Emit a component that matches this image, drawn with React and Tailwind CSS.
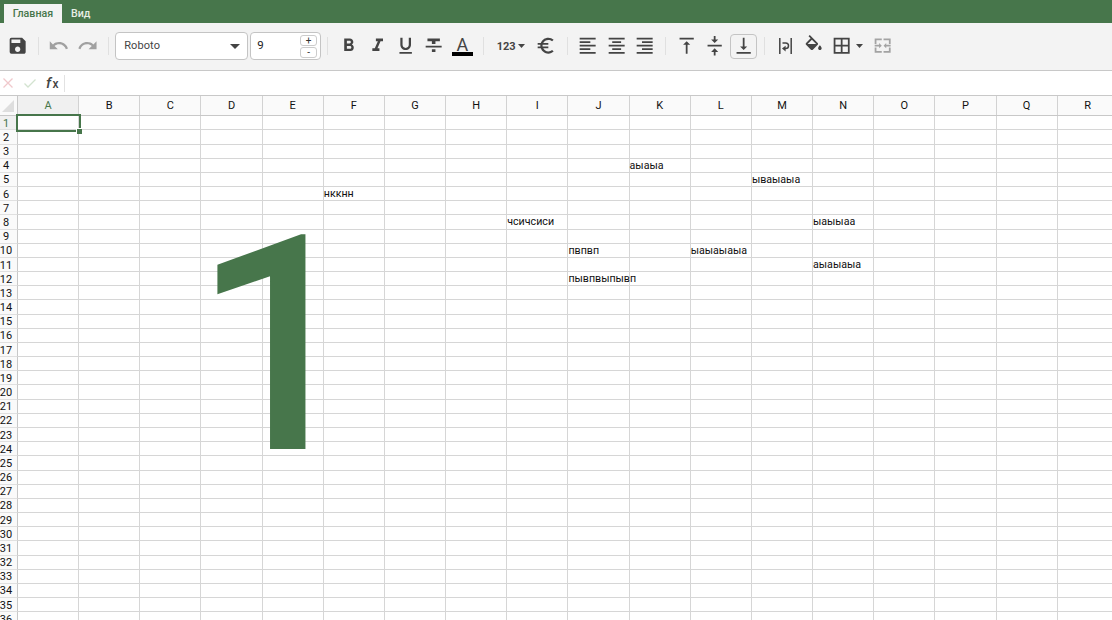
import {
  MdSave, MdUndo, MdRedo, MdFormatBold, MdFormatItalic, MdFormatUnderlined,
  MdEuroSymbol, MdFormatAlignLeft, MdFormatAlignCenter, MdFormatAlignRight,
  MdVerticalAlignTop, MdVerticalAlignCenter, MdVerticalAlignBottom,
  MdBorderAll, MdFormatStrikethrough,
} from "react-icons/md";

const COLUMNS = "ABCDEFGHIJKLMNOPQR".split("");
const ROWS = Array.from({ length: 36 }, (_, i) => i + 1);

const CELLS = {
  K4: "аыаыа",
  M5: "ываыаыа",
  F6: "нккнн",
  I8: "чсичсиси",
  N8: "ыаыыаа",
  J10: "пвпвп",
  L10: "ыаыаыаыа",
  N11: "аыаыаыа",
  J12: "пывпвыпывп",
};

function Tool({ children, className = "text-[#444]" }) {
  return (
    <button className={`flex h-[26px] w-[28.4px] shrink-0 items-center justify-center text-[21.33px] ${className}`}>
      {children}
    </button>
  );
}

function Separator() {
  return (
    <div className="flex w-[13.5px] shrink-0 justify-center">
      <div className="h-[18px] w-px bg-[#e0e0e0]" />
    </div>
  );
}

function Caret() {
  return (
    <svg className="h-[4px] w-[7px] shrink-0" viewBox="0 0 7 4" fill="#444">
      <path d="M0 0h7L3.5 4z" />
    </svg>
  );
}

function WrapIcon() {
  return (
    <svg className="h-[16px] w-[13px]" viewBox="0 0 13 16" fill="none" stroke="#444" strokeWidth="1.5">
      <path d="M.8 0v16M12.2 0v16M3.5 5h3.2a2.7 2.7 0 0 1 0 5.6H5" />
      <path d="M6.6 7.8v5.6L3 10.6z" fill="#444" stroke="none" />
    </svg>
  );
}

function FillIcon() {
  return (
    <svg className="size-[21.33px]" viewBox="0 0 24 24" fill="#444">
      <path d="M16.56 8.94 7.62 0 6.21 1.41l2.38 2.38-5.15 5.15a1.49 1.49 0 0 0 0 2.12l5.5 5.5c.29.29.68.44 1.06.44s.77-.15 1.06-.44l5.5-5.5c.59-.58.59-1.53 0-2.12zM5.21 10 10 5.21 14.79 10H5.21zM19 11.5s-2 2.17-2 3.5c0 1.1.9 2 2 2s2-.9 2-2c0-1.33-2-3.5-2-3.5z" />
    </svg>
  );
}

function MergeIcon() {
  return (
    <svg className="size-[21.33px]" viewBox="0 0 24 24" fill="#a3a3a3">
      <path d="M5 10H3V4h8v2H5zM19 18h-6v2h8v-6h-2zM5 18v-4H3v6h8v-2zM21 4h-8v2h6v4h2zM8 13v2l3-3-3-3v2H3v2zM16 11V9l-3 3 3 3v-2h5v-2z" />
    </svg>
  );
}

function Toolbar() {
  return (
    <div className="flex h-[48px] shrink-0 items-center border-b border-[#c8c8c8] bg-[#f3f3f3] pb-[1px] pl-[3px]">
      <Tool><MdSave /></Tool>
      <Separator />
      <Tool className="text-[#a0a0a0]"><MdUndo /></Tool>
      <Tool className="text-[#a0a0a0]"><MdRedo /></Tool>
      <Separator />
      <div className="flex h-[28px] w-[133px] shrink-0 items-center justify-between rounded-[4px] border border-[#c4c4c4] bg-white pr-[7px] pl-[8px]">
        <span className="text-[11px] tracking-[.1px] text-[#444]">Roboto</span>
        <svg className="h-[5px] w-[10px]" viewBox="0 0 10 5" fill="#444"><path d="M0 0h10L5 5z" /></svg>
      </div>
      <div className="ml-[2px] flex h-[28px] w-[71px] shrink-0 items-center justify-between rounded-[4px] border border-[#c4c4c4] bg-white pr-[3px] pl-[6px]">
        <span className="text-[11.5px] text-[#222]">9</span>
        <div className="flex flex-col gap-px text-[10px] leading-[9px] text-[#333]">
          <span className="h-[11px] w-[17px] rounded-[3px] border border-[#ccc] text-center">+</span>
          <span className="h-[11px] w-[17px] rounded-[3px] border border-[#ccc] text-center">-</span>
        </div>
      </div>
      <Separator />
      <Tool><MdFormatBold /></Tool>
      <Tool><MdFormatItalic /></Tool>
      <Tool><MdFormatUnderlined /></Tool>
      <Tool><MdFormatStrikethrough /></Tool>
      <Tool>
        <span className="flex h-[19px] w-[21px] flex-col items-center justify-between">
          <span className="text-[18px] leading-[15px]">A</span>
          <span className="h-[4px] w-[21px] bg-black" />
        </span>
      </Tool>
      <Separator />
      <button className="flex w-[41.8px] shrink-0 items-center pl-[4px] text-[#444]">
        <span className="w-[24px] text-[11px] leading-none font-bold">123</span>
        <Caret />
      </button>
      <Tool><MdEuroSymbol /></Tool>
      <Separator />
      <Tool><MdFormatAlignLeft /></Tool>
      <Tool><MdFormatAlignCenter /></Tool>
      <Tool><MdFormatAlignRight /></Tool>
      <Separator />
      <Tool><MdVerticalAlignTop /></Tool>
      <Tool><MdVerticalAlignCenter /></Tool>
      <Tool>
        <span className="flex h-[25px] w-[27px] items-center justify-center rounded-[4px] border border-[#c4c4c4]">
          <MdVerticalAlignBottom className="shrink-0" />
        </span>
      </Tool>
      <Separator />
      <Tool><WrapIcon /></Tool>
      <Tool><FillIcon /></Tool>
      <Tool><MdBorderAll /></Tool>
      <div className="flex w-[12.5px] shrink-0"><Caret /></div>
      <Tool><MergeIcon /></Tool>
    </div>
  );
}

function FormulaBar() {
  return (
    <div className="flex h-[24px] shrink-0 items-center bg-white">
      <svg className="ml-[3px] size-[10px]" viewBox="0 0 10 10" stroke="#f0c8cc" strokeWidth="1.3"><path d="M.5.5l9 9M9.5.5l-9 9" /></svg>
      <svg className="ml-[11px] h-[9px] w-[12px]" viewBox="0 0 12 9" fill="none" stroke="#d3e3d0" strokeWidth="1.3"><path d="M.5 4.5l3.500 3.500 7.500-7.500" /></svg>
      <span className="ml-[10px] flex w-[18px] items-center text-[15px] leading-none font-medium text-[#444]">
        <span className="w-[6.500px] italic">f</span>
        <span className="pt-[2px] text-[12px]">x</span>
      </span>
      <div className="h-[17px] w-px bg-[#e2e2e2]" />
    </div>
  );
}

function Sheet() {
  return (
    <div className="relative min-h-0 flex-1 overflow-hidden">
      <div className="flex h-[21px] w-[1120px] border-y border-[#c8c8c8] bg-[#fafafa] text-[11px]">
        <div className="flex w-[18px] shrink-0 items-end border-r border-[#c8c8c8] pb-[3px] pl-[2px]">
          <svg className="size-[12px]" viewBox="0 0 12 12" fill="#dedede"><path d="M12 0v12H0z" /></svg>
        </div>
        {COLUMNS.map((c) => (
          <div
            key={c}
            className={`flex w-[61.17px] shrink-0 items-center justify-center border-r border-[#d2d2d2] pt-[2px] ${c === "A" ? "bg-[#f0f0f0] text-[#47764b]" : "text-[#111]"}`}
          >
            {c}
          </div>
        ))}
      </div>
      {ROWS.map((r) => (
        <div key={r} className={`flex w-[1120px] ${r === 1 ? "h-[14.4px]" : "h-[14.18px]"}`}>
          <div
            className={`flex w-[18px] shrink-0 items-center justify-center border-r border-b border-r-[#c8c8c8] border-b-[#e0e0e0] pt-[1px] pr-[5px] text-[11px] leading-none ${r === 1 ? "bg-[#f0f0f0] text-[#47764b]" : "bg-[#fafafa] text-[#111]"}`}
          >
            {r}
          </div>
          {COLUMNS.map((c) => (
            <div key={c} className="w-[61.17px] shrink-0 border-r border-b border-[#d6d6d6] text-[10.67px] leading-[13px] whitespace-nowrap text-[#111]">
              {CELLS[c + r]}
            </div>
          ))}
        </div>
      ))}
      <div className="absolute top-[19px] left-[16px] h-[18px] w-[65px] border-2 border-[#47764b]" />
      <div className="absolute top-[33px] left-[76px] size-[6px] border-t border-l border-white bg-[#47764b]" />
      <span className="absolute top-[101px] left-[192.5px] text-[301px] leading-[300px] font-medium text-[#47764b]">1</span>
    </div>
  );
}

export default function App() {
  return (
    <div className="flex h-[620px] w-[1112px] flex-col overflow-hidden bg-white font-['Roboto',sans-serif]">
      <nav className="flex h-[23px] shrink-0 items-end bg-[#47764b] pl-[4px] text-[10.67px] font-medium">
        <div className="flex h-[19px] w-[58px] items-center justify-center bg-[#f3f3f3] text-[#47764b]">Главная</div>
        <div className="flex h-[19px] items-center pl-[9px] text-[#e6eee6]">Вид</div>
      </nav>
      <Toolbar />
      <FormulaBar />
      <Sheet />
    </div>
  );
}
